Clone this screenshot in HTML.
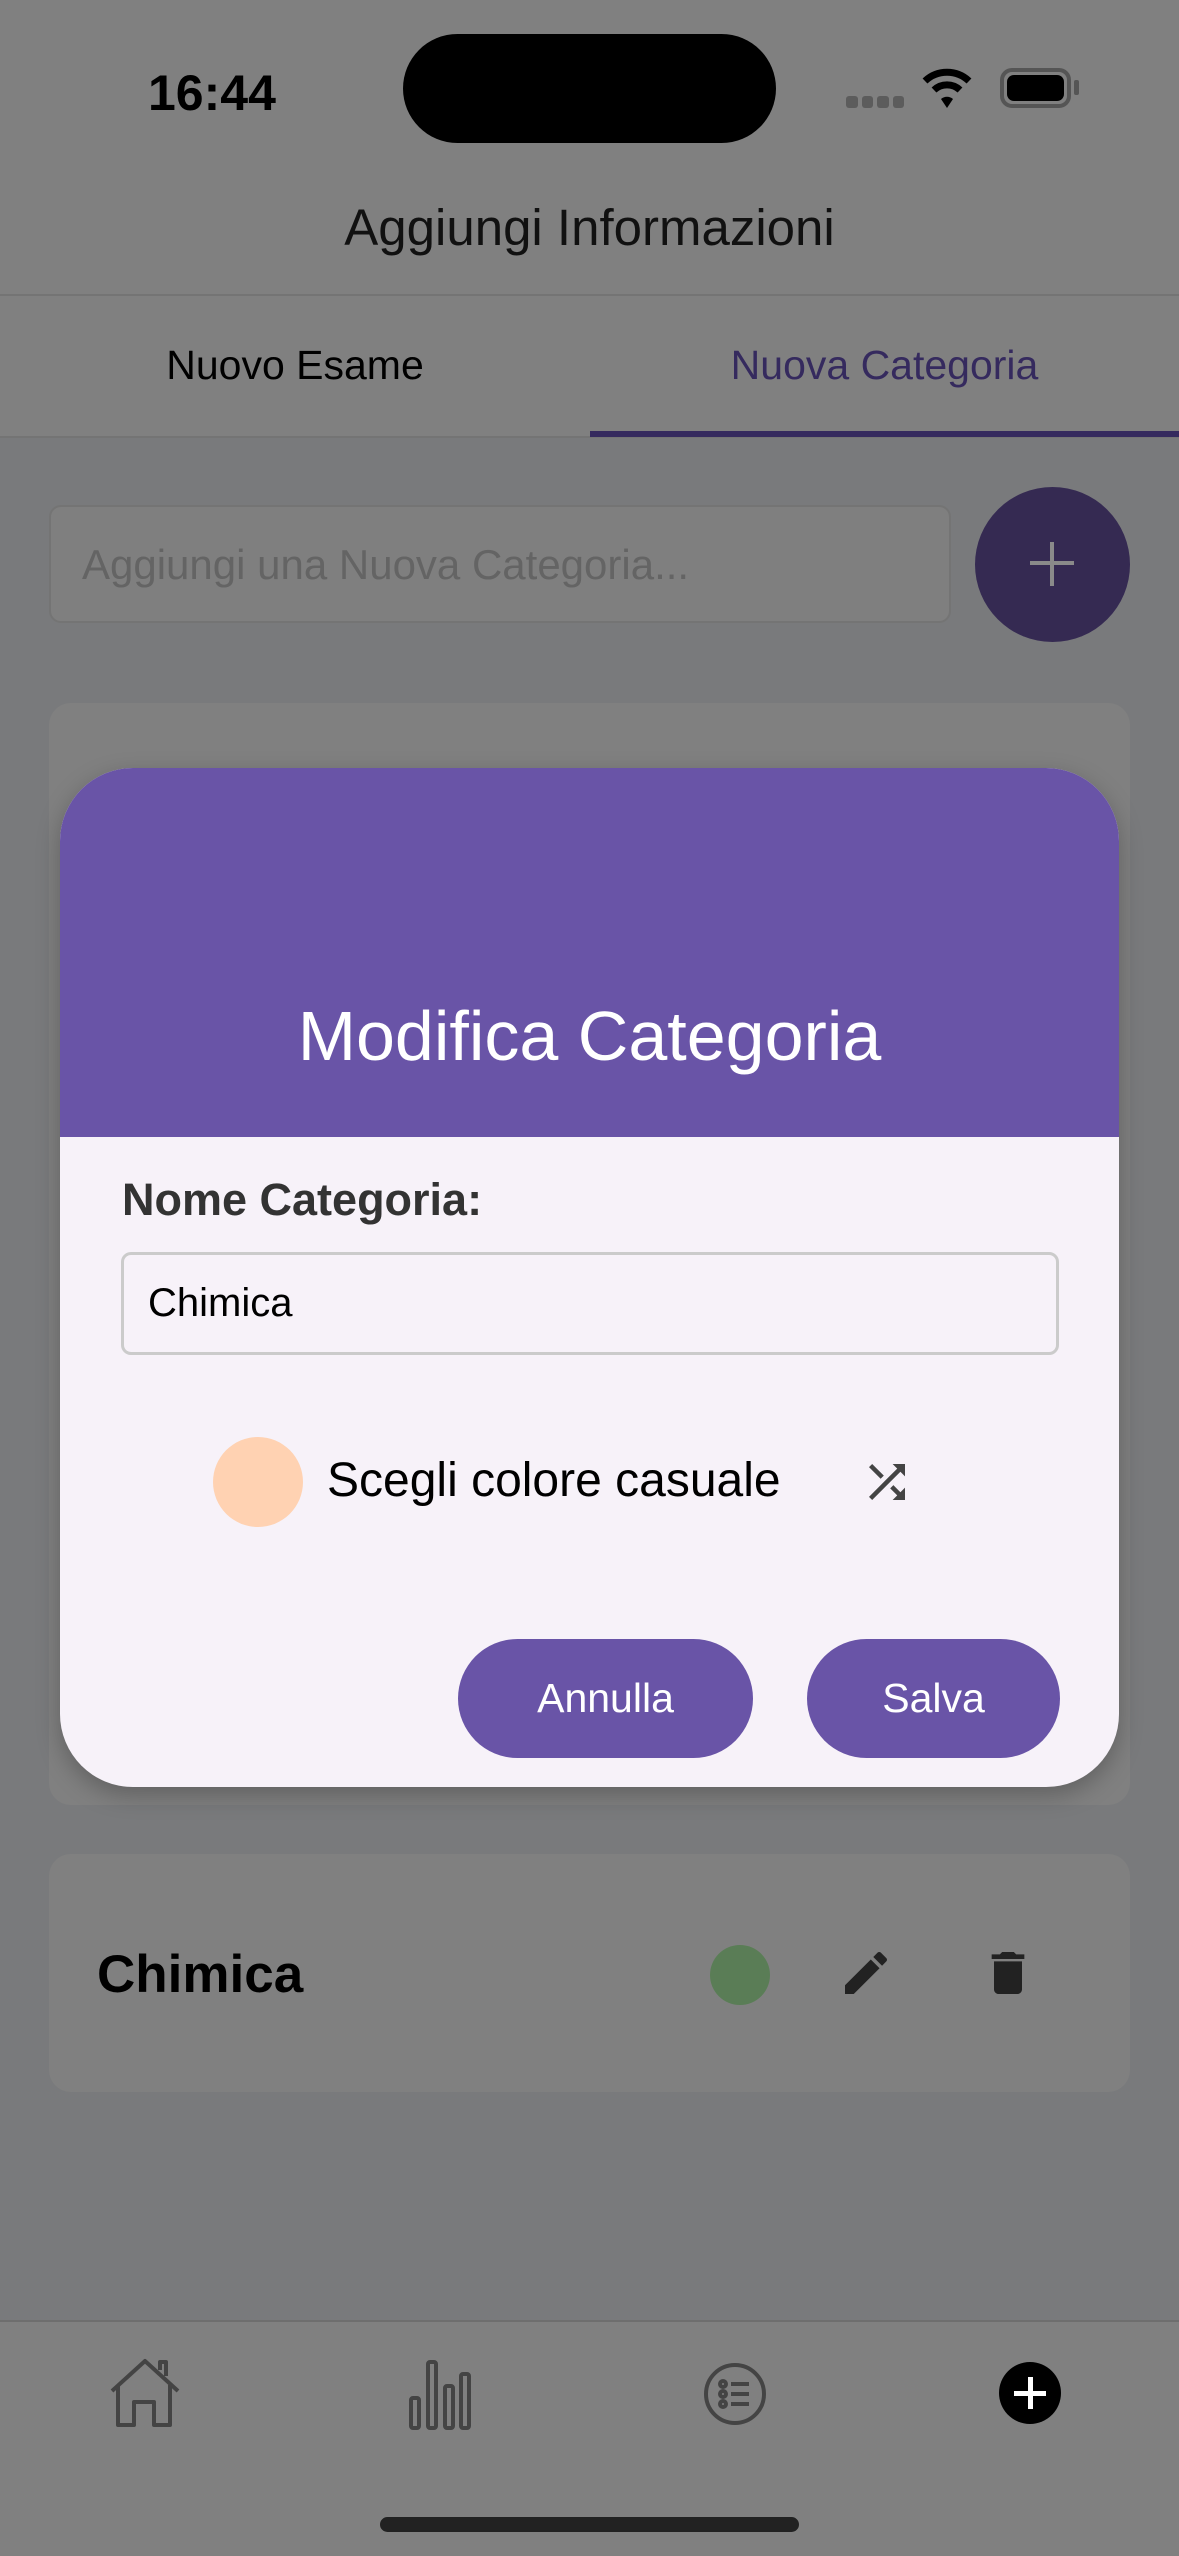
<!DOCTYPE html>
<html><head><meta charset="utf-8"><style>
*{margin:0;padding:0;box-sizing:border-box}
body{width:1179px;height:2556px;background:#797a7c;position:relative;overflow:hidden;font-family:"Liberation Sans",sans-serif}
.a{position:absolute}
</style></head><body>
<div class="a" style="left:0;top:0;width:1179px;height:437px;background:#808080"></div>
<div class="a" style="left:0;top:294px;width:1179px;height:2px;background:#747474"></div>
<div class="a" style="left:0;top:436px;width:1179px;height:2px;background:#747474"></div>
<div class="a" style="left:148px;top:64px;font-size:50px;font-weight:bold;color:#000">16:44</div>
<div class="a" style="left:403px;top:34px;width:373px;height:109px;border-radius:55px;background:#000"></div>
<div class="a" style="left:846px;top:96px;width:58px;height:12px;display:flex;gap:4px"><i style="flex:1;background:#5c5c5c;border-radius:3px"></i><i style="flex:1;background:#5c5c5c;border-radius:3px"></i><i style="flex:1;background:#5c5c5c;border-radius:3px"></i><i style="flex:1;background:#5c5c5c;border-radius:3px"></i></div>
<svg class="a" style="left:922px;top:66px" width="50" height="44" viewBox="0 0 50 44"><path d="M3 15a32 32 0 0 1 44 0" stroke="#000" stroke-width="7" fill="none"/><path d="M12 24a19 19 0 0 1 26 0" stroke="#000" stroke-width="7" fill="none"/><path d="M19 33l6 9 6-9a9 9 0 0 0-12 0z" fill="#000"/></svg>
<div class="a" style="left:1000px;top:68px;width:71px;height:40px;border:4px solid #555;border-radius:12px;padding:3px"><div style="width:100%;height:100%;background:#000;border-radius:7px"></div></div>
<div class="a" style="left:1074px;top:80px;width:5px;height:15px;background:#555;border-radius:2px"></div>
<div class="a" style="left:0;top:198px;width:1179px;text-align:center;font-size:51px;color:#111">Aggiungi Informazioni</div>
<div class="a" style="left:0;top:342px;width:590px;text-align:center;font-size:41px;color:#000">Nuovo Esame</div>
<div class="a" style="left:590px;top:342px;width:589px;text-align:center;font-size:41px;color:#352a5e">Nuova Categoria</div>
<div class="a" style="left:590px;top:431px;width:589px;height:6px;background:#352a5e"></div>
<div class="a" style="left:49px;top:505px;width:902px;height:118px;border:2px solid #747474;border-radius:12px;background:#7f7f7f"></div>
<div class="a" style="left:82px;top:541px;font-size:42px;color:#646464">Aggiungi una Nuova Categoria...</div>
<div class="a" style="left:975px;top:487px;width:155px;height:155px;border-radius:50%;background:#352a52"></div>
<div class="a" style="left:1030px;top:561px;width:44px;height:4px;background:#8a8a8a"></div>
<div class="a" style="left:1050px;top:542px;width:4px;height:44px;background:#8a8a8a"></div>
<div class="a" style="left:49px;top:703px;width:1081px;height:1102px;border-radius:22px;background:#808080"></div>
<div class="a" style="left:60px;top:768px;width:1059px;height:1019px;border-radius:73px;background:#f7f2f9;overflow:hidden;box-shadow:0 8px 24px rgba(0,0,0,.25)">
<div style="height:369px;background:#6954a7;position:relative"><div class="a" style="left:0;width:100%;top:228px;text-align:center;font-size:70px;color:#fff">Modifica Categoria</div></div>
</div>
<div class="a" style="left:122px;top:1174px;font-size:45px;font-weight:bold;color:#333">Nome Categoria:</div>
<div class="a" style="left:121px;top:1252px;width:938px;height:103px;border:3px solid #cbcbcb;border-radius:10px"></div>
<div class="a" style="left:148px;top:1281px;font-size:40px;color:#000">Chimica</div>
<div class="a" style="left:213px;top:1437px;width:90px;height:90px;border-radius:50%;background:#ffd2b2"></div>
<div class="a" style="left:327px;top:1453px;font-size:48px;color:#000">Scegli colore casuale</div>
<svg class="a" style="left:858px;top:1455px" width="58" height="54" viewBox="0 0 24 24"><path fill="#444" d="M10.59 9.17L5.41 4 4 5.41l5.17 5.17 1.42-1.41zM14.5 4l2.04 2.04L4 18.59 5.41 20 17.96 7.46 20 9.5V4h-5.5zm.33 9.41l-1.41 1.41 3.13 3.13L14.5 20H20v-5.5l-2.04 2.04-3.13-3.13z"/></svg>
<div class="a" style="left:458px;top:1639px;width:295px;height:119px;border-radius:60px;background:#6954a7;color:#fff;font-size:41px;text-align:center;line-height:119px">Annulla</div>
<div class="a" style="left:807px;top:1639px;width:253px;height:119px;border-radius:60px;background:#6954a7;color:#fff;font-size:41px;text-align:center;line-height:119px">Salva</div>
<div class="a" style="left:49px;top:1854px;width:1081px;height:238px;border-radius:22px;background:#808080"></div>
<div class="a" style="left:97px;top:1944px;font-size:53px;font-weight:bold;color:#000">Chimica</div>
<div class="a" style="left:710px;top:1945px;width:60px;height:60px;border-radius:50%;background:#5a7d56"></div>
<svg class="a" style="left:838px;top:1945px" width="56" height="56" viewBox="0 0 24 24"><path fill="#222" d="M3 17.25V21h3.75L17.81 9.94l-3.75-3.75L3 17.25zM20.71 7.04a1 1 0 0 0 0-1.41l-2.34-2.34a1 1 0 0 0-1.41 0l-1.83 1.83 3.75 3.75 1.83-1.83z"/></svg>
<svg class="a" style="left:980px;top:1945px" width="56" height="56" viewBox="0 0 24 24"><path fill="#222" d="M6 19c0 1.1.9 2 2 2h8c1.1 0 2-.9 2-2V7H6v12zM19 4h-3.5l-1-1h-5l-1 1H5v2h14V4z"/></svg>
<div class="a" style="left:0;top:2320px;width:1179px;height:236px;background:#808080;border-top:2px solid #6e6e6e"></div>
<svg class="a" style="left:108px;top:2358px" width="74" height="72" viewBox="0 0 74 72"><path d="M4 33L37 3l33 30M10 27v40h16V44h20v23h16V27M52 12V4h6v14" stroke="#444" stroke-width="4" fill="none" stroke-linejoin="round"/></svg>
<svg class="a" style="left:408px;top:2358px" width="64" height="72" viewBox="0 0 64 72"><g stroke="#444" stroke-width="4" fill="none"><rect x="3" y="40" width="8" height="30" rx="2"/><rect x="20" y="4" width="8" height="66" rx="2"/><rect x="37" y="28" width="8" height="42" rx="2"/><rect x="53" y="16" width="8" height="54" rx="2"/></g></svg>
<svg class="a" style="left:703px;top:2362px" width="64" height="64" viewBox="0 0 64 64"><g stroke="#444" stroke-width="4" fill="none"><circle cx="32" cy="32" r="29"/><circle cx="20" cy="22" r="3"/><circle cx="20" cy="32" r="3"/><circle cx="20" cy="42" r="3"/><path d="M28 22h18M28 32h18M28 42h18"/></g></svg>
<div class="a" style="left:999px;top:2362px;width:62px;height:62px;border-radius:50%;background:#000"></div>
<div class="a" style="left:1014px;top:2391px;width:32px;height:5px;background:#fff"></div>
<div class="a" style="left:1028px;top:2377px;width:5px;height:32px;background:#fff"></div>
<div class="a" style="left:380px;top:2517px;width:419px;height:15px;border-radius:8px;background:#222"></div>
</body></html>
